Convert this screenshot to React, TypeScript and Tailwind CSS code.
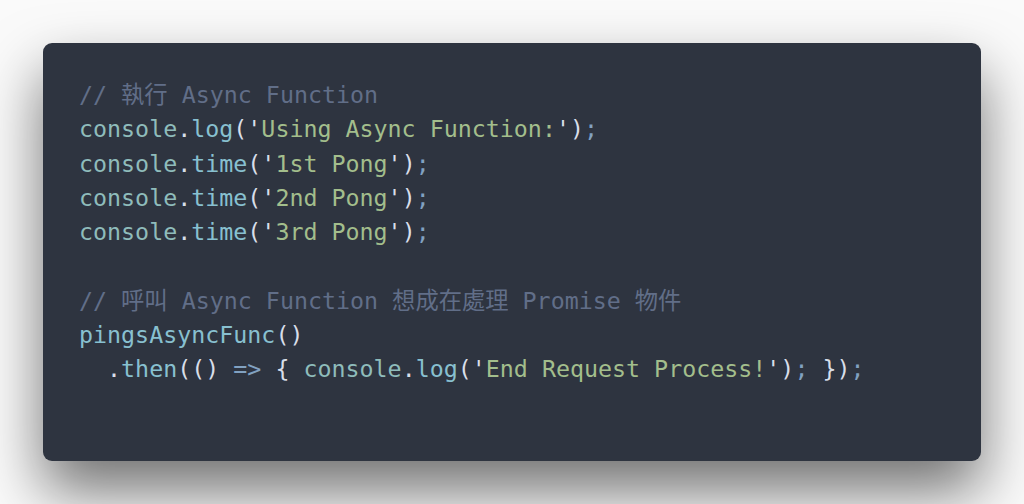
type Tok = [string, string];

const C = {
  cm: "text-[#616e88]",
  obj: "text-[#8fbcbb]",
  fn: "text-[#88c0d0]",
  str: "text-[#a3be8c]",
  pn: "text-[#d8dee9]",
  op: "text-[#81a1c1]",
};

const LINES: Tok[][] = [
  [[C.cm, "// 執行 Async Function"]],
  [[C.obj, "console"], [C.pn, "."], [C.fn, "log"], [C.pn, "('"], [C.str, "Using Async Function:"], [C.pn, "')"], [C.op, ";"]],
  [[C.obj, "console"], [C.pn, "."], [C.fn, "time"], [C.pn, "('"], [C.str, "1st Pong"], [C.pn, "')"], [C.op, ";"]],
  [[C.obj, "console"], [C.pn, "."], [C.fn, "time"], [C.pn, "('"], [C.str, "2nd Pong"], [C.pn, "')"], [C.op, ";"]],
  [[C.obj, "console"], [C.pn, "."], [C.fn, "time"], [C.pn, "('"], [C.str, "3rd Pong"], [C.pn, "')"], [C.op, ";"]],
  [],
  [[C.cm, "// 呼叫 Async Function 想成在處理 Promise 物件"]],
  [[C.fn, "pingsAsyncFunc"], [C.pn, "()"]],
  [
    [C.pn, "  ."],
    [C.fn, "then"],
    [C.pn, "(() "],
    [C.op, "=>"],
    [C.pn, " { "],
    [C.obj, "console"],
    [C.pn, "."],
    [C.fn, "log"],
    [C.pn, "('"],
    [C.str, "End Request Process!"],
    [C.pn, "')"],
    [C.op, ";"],
    [C.pn, " })"],
    [C.op, ";"],
  ],
];

export default function App() {
  return (
    <div className="w-[1024px] h-[504px] bg-[#fafafa] overflow-hidden pt-[43px] pl-[43px]">
      <div className="w-[938px] h-[418px] rounded-[9px] bg-[#2e3440] shadow-[0_30px_60px_rgba(0,0,0,0.55)] pt-[35px] pl-[36px]">
        <pre className="font-['DejaVu_Sans_Mono','Noto_Sans_CJK_TC',monospace] text-[23.3px] leading-[34.25px]">
          {LINES.map((line, i) => (
            <div key={i} className="h-[34.25px]">
              {line.map(([cls, t], j) => (
                <span key={j} className={cls}>
                  {t}
                </span>
              ))}
            </div>
          ))}
        </pre>
      </div>
    </div>
  );
}
